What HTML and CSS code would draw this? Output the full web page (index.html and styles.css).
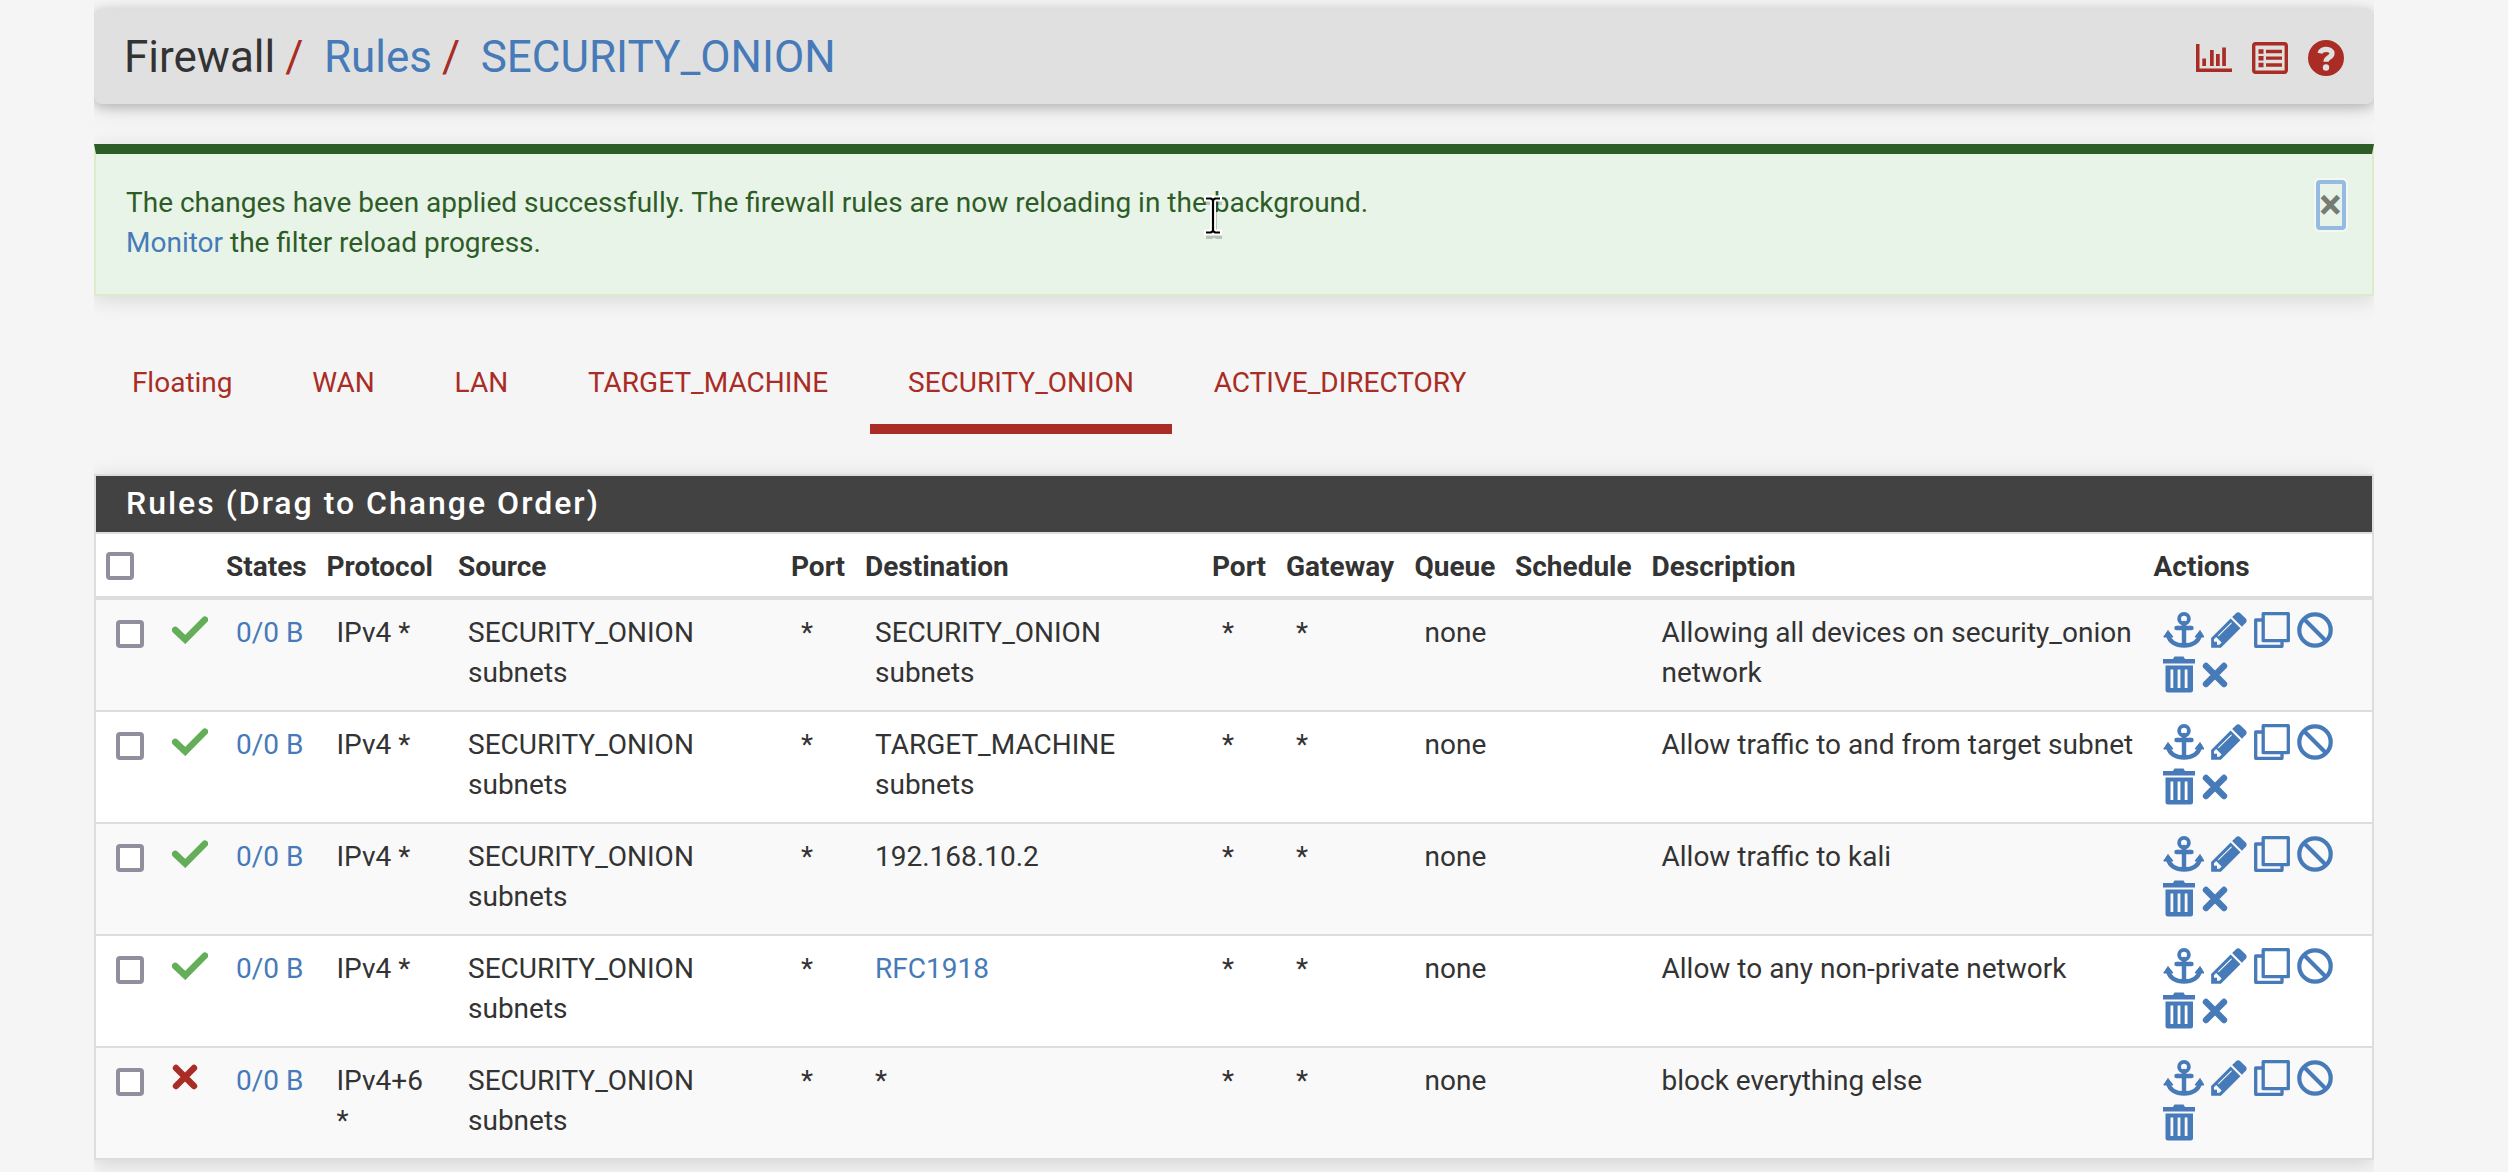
FILE: index.html
```html
<!DOCTYPE html>
<html lang="en">
<head>
<meta charset="utf-8">
<title>Firewall: Rules: SECURITY_ONION</title>
<link rel="stylesheet" href="styles.css">
</head>
<body>
<svg class="sprite" aria-hidden="true">
  <symbol id="anchor" viewBox="0 0 41 36">
    <circle cx="21" cy="6.8" r="4.9" fill="none" stroke="currentColor" stroke-width="3.8"/>
    <path d="M13.5 16h15M21 11v22M5 23c1.500 7 8 10.500 16 10.500S35.500 30 37 23" fill="none" stroke="currentColor" stroke-width="4.400" stroke-linecap="round"/>
    <path d="M5 18.500l5 6.500H.7zM37 18.500l4 6.500h-9z" fill="currentColor" stroke="currentColor" stroke-width="1" stroke-linejoin="round"/>
  </symbol>
  <symbol id="pencil" viewBox="128 149 1536 1515">
    <path fill="currentColor" d="M491 1536l91-91-235-235-91 91v107h128v128h107zM1014 608q0-22-22-22-10 0-17 7l-542 542q-7 7-7 17 0 22 22 22 10 0 17-7l542-542q7-7 7-17zM966 416l416 416-832 832h-416v-416zM1649 512q0 53-37 90l-166 166-416-416 166-165q36-38 90-38 53 0 91 38l235 234q37 39 37 91z"/>
  </symbol>
  <symbol id="clone" viewBox="0 0 36 36">
    <path d="M9.200 1.700h25.100v27H9.200zM9 8H1.700v26.300h26.300V29" fill="none" stroke="currentColor" stroke-width="3.300" stroke-linejoin="round"/>
  </symbol>
  <symbol id="ban" viewBox="0 0 36 36">
    <path d="M6.500 6.500l23 23" stroke="currentColor" stroke-width="4"/>
    <circle cx="18" cy="18" r="15.700" fill="none" stroke="currentColor" stroke-width="4.200"/>
  </symbol>
  <symbol id="trash" viewBox="0 0 32 37">
    <path fill="currentColor" fill-rule="evenodd" d="M0 3h10l1.500-2.500h9L22 3h10v4.500H0zM2.500 9.500h27.500V34q0 2.500-2.500 2.500H5Q2.500 36.500 2.500 34zM7.500 13.500v18.500h2.800V13.500zM14.600 13.500v18.500h2.800V13.500zM21.700 13.500v18.500h2.800V13.500z"/>
  </symbol>
  <symbol id="cross" viewBox="0 0 26 26">
    <path d="M4 4l18 18M22 4L4 22" stroke="currentColor" stroke-width="6.400" stroke-linecap="round"/>
  </symbol>
  <symbol id="check" viewBox="0 0 36 28">
    <path d="M3.200 14l10 9.500L32.800 3.700" fill="none" stroke="currentColor" stroke-width="6.600" stroke-linecap="round"/>
  </symbol>
  <symbol id="chart" viewBox="0 0 36 28">
    <path fill="currentColor" d="M0 0h3.500v24.500H36V28H0zM6.300 14.500H10V22H6.300zM14 6h3.700v16H14zM20 10h3.700v12H20zM26.200 3.500h3.700V22h-3.700z"/>
  </symbol>
  <symbol id="list" viewBox="0 0 36 32">
    <rect x="1.700" y="1.700" width="32.600" height="28.600" rx="2" fill="none" stroke="currentColor" stroke-width="3.400"/>
    <path d="M14 9.500h16M14 16.200h16M14 23h16" stroke="currentColor" stroke-width="3.300"/>
    <path d="M6.500 9.500h5M6.500 16.200h5M6.500 23h5" stroke="currentColor" stroke-width="4.600"/>
  </symbol>
  <symbol id="help" viewBox="0 0 36 36">
    <circle cx="18" cy="18" r="18" fill="currentColor"/>
    <path d="M12 13.200C13 8 24 8 24 13.500c0 4-6 3.800-6 8.200" fill="none" stroke="#e0e0e0" stroke-width="5.200"/>
    <circle cx="18" cy="27.500" r="3.200" fill="#e0e0e0"/>
  </symbol>
</svg>

<header class="page-header">
  <h1 class="breadcrumb"><span>Firewall</span><span class="sep">/</span><a>Rules</a><span class="sep">/</span><a>SECURITY_ONION</a></h1>
  <nav class="shortcuts">
    <svg width="36" height="28"><use href="#chart"/></svg>
    <svg width="36" height="32"><use href="#list"/></svg>
    <svg width="36" height="36"><use href="#help"/></svg>
  </nav>
</header>

<section class="alert">
  <p>The changes have been applied successfully. The firewall rules are now reloading in the background.<br><a>Monitor</a> the filter reload progress.</p>
  <button class="close" type="button">×</button>
  <svg class="ibeam" width="22" height="46" viewBox="0 0 22 46">
    <g fill="none"><path d="M3 5h5l3 2 3-2h5M3 39h5l3-2 3 2h5M11 7v30" stroke="#0003" stroke-width="6" transform="translate(1 3)"/>
    <path d="M2 4.500h18M11 5v34M2 38.500h18" stroke="#fff" stroke-width="6"/>
    <path d="M4 4.500h5l2 1.500 2-1.500h5M11 6v32M4 38.500h5l2-1.500 2 1.500h5" stroke="#000" stroke-width="2.200"/></g>
  </svg>
</section>

<nav class="tabs">
  <a>Floating</a><a>WAN</a><a>LAN</a><a>TARGET_MACHINE</a><a class="active">SECURITY_ONION</a><a>ACTIVE_DIRECTORY</a>
</nav>

<section class="panel">
  <h2>Rules (Drag to Change Order)</h2>
  <table>
    <colgroup><col class="c-check"><col class="c-icon"><col class="c-states"><col class="c-proto"><col class="c-source"><col class="c-sport"><col class="c-dest"><col class="c-dport"><col class="c-gateway"><col class="c-queue"><col class="c-schedule"><col class="c-desc"><col></colgroup>
    <thead>
      <tr><th><i class="box"></i></th><th></th><th>States</th><th>Protocol</th><th>Source</th><th>Port</th><th>Destination</th><th>Port</th><th>Gateway</th><th>Queue</th><th>Schedule</th><th>Description</th><th>Actions</th></tr>
    </thead>
    <tbody>
      <tr>
        <td><i class="box"></i></td><td><svg class="pass" width="36" height="28"><use href="#check"/></svg></td><td><a>0/0 B</a></td><td>IPv4 *</td><td>SECURITY_ONION<br>subnets</td><td>*</td><td>SECURITY_ONION<br>subnets</td><td>*</td><td>*</td><td>none</td><td></td><td>Allowing all devices on security_onion<br>network</td>
        <td><div class="actions"><svg width="41" height="36"><use href="#anchor"/></svg><svg width="36" height="36"><use href="#pencil"/></svg><svg width="36" height="36"><use href="#clone"/></svg><svg width="36" height="36"><use href="#ban"/></svg><svg width="32" height="37"><use href="#trash"/></svg><svg width="26" height="26"><use href="#cross"/></svg></div></td>
      </tr>
      <tr>
        <td><i class="box"></i></td><td><svg class="pass" width="36" height="28"><use href="#check"/></svg></td><td><a>0/0 B</a></td><td>IPv4 *</td><td>SECURITY_ONION<br>subnets</td><td>*</td><td>TARGET_MACHINE<br>subnets</td><td>*</td><td>*</td><td>none</td><td></td><td>Allow traffic to and from target subnet</td>
        <td><div class="actions"><svg width="41" height="36"><use href="#anchor"/></svg><svg width="36" height="36"><use href="#pencil"/></svg><svg width="36" height="36"><use href="#clone"/></svg><svg width="36" height="36"><use href="#ban"/></svg><svg width="32" height="37"><use href="#trash"/></svg><svg width="26" height="26"><use href="#cross"/></svg></div></td>
      </tr>
      <tr>
        <td><i class="box"></i></td><td><svg class="pass" width="36" height="28"><use href="#check"/></svg></td><td><a>0/0 B</a></td><td>IPv4 *</td><td>SECURITY_ONION<br>subnets</td><td>*</td><td>192.168.10.2</td><td>*</td><td>*</td><td>none</td><td></td><td>Allow traffic to kali</td>
        <td><div class="actions"><svg width="41" height="36"><use href="#anchor"/></svg><svg width="36" height="36"><use href="#pencil"/></svg><svg width="36" height="36"><use href="#clone"/></svg><svg width="36" height="36"><use href="#ban"/></svg><svg width="32" height="37"><use href="#trash"/></svg><svg width="26" height="26"><use href="#cross"/></svg></div></td>
      </tr>
      <tr>
        <td><i class="box"></i></td><td><svg class="pass" width="36" height="28"><use href="#check"/></svg></td><td><a>0/0 B</a></td><td>IPv4 *</td><td>SECURITY_ONION<br>subnets</td><td>*</td><td><a>RFC1918</a></td><td>*</td><td>*</td><td>none</td><td></td><td>Allow to any non-private network</td>
        <td><div class="actions"><svg width="41" height="36"><use href="#anchor"/></svg><svg width="36" height="36"><use href="#pencil"/></svg><svg width="36" height="36"><use href="#clone"/></svg><svg width="36" height="36"><use href="#ban"/></svg><svg width="32" height="37"><use href="#trash"/></svg><svg width="26" height="26"><use href="#cross"/></svg></div></td>
      </tr>
      <tr>
        <td><i class="box"></i></td><td><svg class="block" width="26" height="26"><use href="#cross"/></svg></td><td><a>0/0 B</a></td><td>IPv4+6<br>*</td><td>SECURITY_ONION<br>subnets</td><td>*</td><td>*</td><td>*</td><td>*</td><td>none</td><td></td><td>block everything else</td>
        <td><div class="actions"><svg width="41" height="36"><use href="#anchor"/></svg><svg width="36" height="36"><use href="#pencil"/></svg><svg width="36" height="36"><use href="#clone"/></svg><svg width="36" height="36"><use href="#ban"/></svg><svg width="32" height="37"><use href="#trash"/></svg></div></td>
      </tr>
    </tbody>
  </table>
</section>
</body>
</html>
```
FILE: styles.css
```css
* { box-sizing: border-box; }
html { background: #f5f5f5; overflow: hidden; }
body {
  width: 2280px;
  height: 1172px;
  margin: 0 0 0 94px;
  padding-top: 9px;
  font: 28px/40px Roboto, "Liberation Sans", sans-serif;
  color: #333;
}
a { color: #467ab8; text-decoration: none; }
svg { display: block; flex: none; }
.sprite { position: absolute; width: 0; height: 0; }

.page-header {
  display: flex;
  align-items: center;
  justify-content: space-between;
  height: 95px;
  padding: 0 30px;
  border-radius: 8px;
  background: #e0e0e0;
  box-shadow: 0 3px 12px rgba(0, 0, 0, .22), 0 4px 26px rgba(0, 0, 0, .1);
}
.breadcrumb { display: flex; margin: 0; padding-top: 1px; font-size: 44px; font-weight: 400; line-height: 48px; }
.sep { padding: 0 20.500px 0 10px; color: #a92c25; }
.shortcuts { display: flex; align-items: center; gap: 20px; padding-top: 3px; color: #a92c25; }

.alert {
  position: relative;
  display: flex;
  justify-content: space-between;
  height: 152px;
  margin-top: 40px;
  padding: 29px 26px 0 30px;
  border: 2px solid #dcebc9;
  border-top: 10px solid #2e5c27;
  background: #e8f4e8;
  color: #2e5c27;
  box-shadow: 0 4px 20px rgba(0, 0, 0, .12);
}
.alert p { margin: 0; }
.close {
  width: 30px;
  height: 50px;
  margin: -3px 0 0;
  padding: 0;
  border: 4px solid #97bae2;
  border-radius: 4px;
  background: none;
  box-shadow: 0 0 0 2px #f3faf6;
  font: 700 42px/42px Roboto, "Liberation Sans", sans-serif;
  text-indent: -1px;
  color: #767b74;
}
.ibeam { position: absolute; left: 1106px; top: 40px; }

.tabs { display: flex; gap: 4px; margin-top: 46px; }
.tabs a { height: 92px; padding: 21px 37.900px 0; color: #a92c25; }
.tabs .active { border-bottom: 10px solid #a92c25; }

.panel {
  height: 686px;
  margin-top: 40px;
  border: 2px solid #ddd;
  background: #fff;
  box-shadow: 0 4px 20px rgba(0, 0, 0, .14);
}
.panel h2 {
  height: 58px;
  margin: 0;
  padding-left: 30px;
  border-bottom: 2px solid #ddd;
  background: #424242;
  color: #fff;
  font-size: 32px;
  font-weight: 500;
  line-height: 55px;
  letter-spacing: 2px;
}

table { width: 2276px; table-layout: fixed; border-collapse: separate; border-spacing: 0; }
.c-check { width: 56px; }
.c-icon { width: 64px; }
.c-states { width: 100.500px; }
.c-proto { width: 131.500px; }
.c-source { width: 333px; }
.c-sport { width: 74px; }
.c-dest { width: 347px; }
.c-dport { width: 74px; }
.c-gateway { width: 128.500px; }
.c-queue { width: 100.500px; }
.c-schedule { width: 136.500px; }
.c-desc { width: 502px; }
th, td { padding: 12.500px 0 0 20px; text-align: left; vertical-align: top; white-space: nowrap; }
th { height: 66px; padding: 13px 0 0 10px; border-bottom: 4px solid #ddd; font-weight: 700; }
td { height: 112px; border-bottom: 2px solid #ddd; }
tbody tr:nth-child(odd) { background: #f9f9f9; }
tbody tr:last-child td { height: 110px; border-bottom: 0; }

.box {
  display: block;
  width: 28px;
  height: 28px;
  margin-top: 5px;
  border: 4px solid #8f8f9d;
  border-radius: 4px;
  background: #fff;
}
td .box { margin-top: 7.500px; }
.pass { margin-top: 3.500px; color: #64ad59; }
.block { margin-top: 3.500px; color: #a92c25; }
.actions { display: flex; flex-wrap: wrap; align-items: center; gap: 8px 7px; width: 172px; margin: -.5px 0 0 -1px; color: #467ab8; }
```
